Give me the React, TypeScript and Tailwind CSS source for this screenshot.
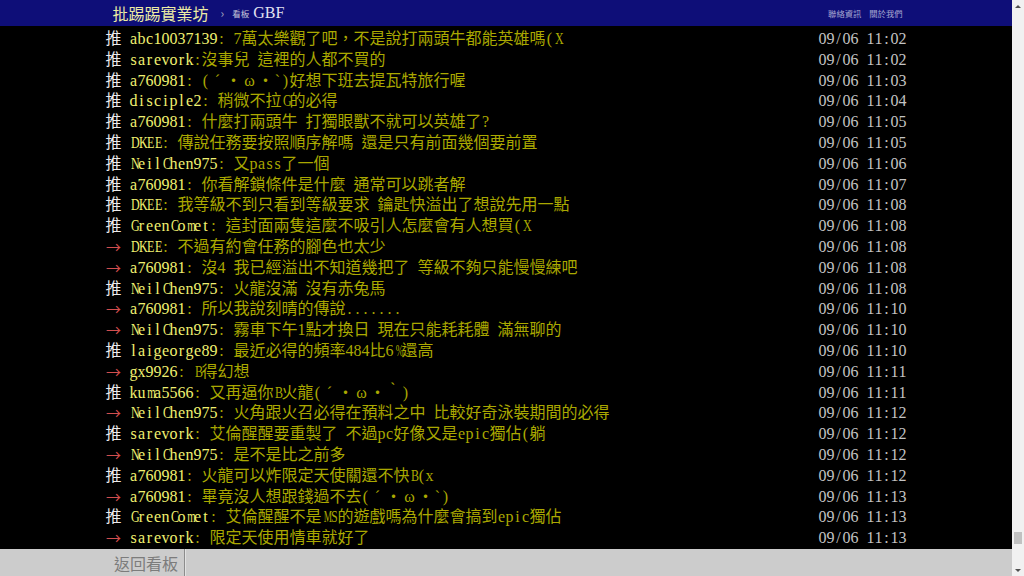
type Push = { tag: "推" | "→"; user: string; text: string; time: string };

const pushes: Push[] = [
  { tag: "推", user: "abc10037139", text: ": 7萬太樂觀了吧，不是說打兩頭牛都能英雄嗎(X", time: "09/06 11:02" },
  { tag: "推", user: "sarevork", text: ":沒事兒 這裡的人都不買的", time: "09/06 11:02" },
  { tag: "推", user: "a760981", text: ": (´・ω・`)好想下班去提瓦特旅行喔", time: "09/06 11:03" },
  { tag: "推", user: "disciple2", text: ": 稍微不拉G的必得", time: "09/06 11:04" },
  { tag: "推", user: "a760981", text: ": 什麼打兩頭牛 打獨眼獸不就可以英雄了?", time: "09/06 11:05" },
  { tag: "推", user: "DKEE", text: ": 傳說任務要按照順序解嗎 還是只有前面幾個要前置", time: "09/06 11:05" },
  { tag: "推", user: "NeilChen975", text: ": 又pass了一個", time: "09/06 11:06" },
  { tag: "推", user: "a760981", text: ": 你看解鎖條件是什麼 通常可以跳者解", time: "09/06 11:07" },
  { tag: "推", user: "DKEE", text: ": 我等級不到只看到等級要求 鑰匙快溢出了想說先用一點", time: "09/06 11:08" },
  { tag: "推", user: "GreenComet", text: ": 這封面兩隻這麼不吸引人怎麼會有人想買(X", time: "09/06 11:08" },
  { tag: "→", user: "DKEE", text: ": 不過有約會任務的腳色也太少", time: "09/06 11:08" },
  { tag: "→", user: "a760981", text: ": 沒4 我已經溢出不知道幾把了 等級不夠只能慢慢練吧", time: "09/06 11:08" },
  { tag: "推", user: "NeilChen975", text: ": 火龍沒滿 沒有赤兔馬", time: "09/06 11:08" },
  { tag: "→", user: "a760981", text: ": 所以我說刻晴的傳說.......", time: "09/06 11:10" },
  { tag: "→", user: "NeilChen975", text: ": 霧車下午1點才換日 現在只能耗耗體 滿無聊的", time: "09/06 11:10" },
  { tag: "推", user: "laigeorge89", text: ": 最近必得的頻率484比6%還高", time: "09/06 11:10" },
  { tag: "→", user: "gx9926", text: ": B得幻想", time: "09/06 11:11" },
  { tag: "推", user: "kuma5566", text: ": 又再逼你B火龍(´・ω・｀)", time: "09/06 11:11" },
  { tag: "→", user: "NeilChen975", text: ": 火角跟火召必得在預料之中 比較好奇泳裝期間的必得", time: "09/06 11:12" },
  { tag: "推", user: "sarevork", text: ": 艾倫醒醒要重製了 不過pc好像又是epic獨佔(躺", time: "09/06 11:12" },
  { tag: "→", user: "NeilChen975", text: ": 是不是比之前多", time: "09/06 11:12" },
  { tag: "推", user: "a760981", text: ": 火龍可以炸限定天使關還不快B(x", time: "09/06 11:12" },
  { tag: "→", user: "a760981", text: ": 畢竟沒人想跟錢過不去(´・ω・`)", time: "09/06 11:13" },
  { tag: "推", user: "GreenComet", text: ": 艾倫醒醒不是MS的遊戲嗎為什麼會搞到epic獨佔", time: "09/06 11:13" },
  { tag: "→", user: "sarevork", text: ": 限定天使用情車就好了", time: "09/06 11:13" },
];

// half-width glyphs squeezed into an 8px cell, like the BBS font does
function cellClass(ch: string) {
  if (ch.charCodeAt(0) >= 0x80) return "inline-block w-[16px] text-center";
  if (ch === "M" || ch === "W" || ch === "%") return "inline-block w-[8px] text-center scale-x-[0.58]";
  if (ch === "m" || ch === "w") return "inline-block w-[8px] text-center scale-x-[0.68]";
  if (/[A-Z]/.test(ch)) return "inline-block w-[8px] text-center scale-x-[0.75]";
  return "inline-block w-[8px] text-center";
}

function Cells({ text }: { text: string }) {
  return (
    <>
      {Array.from(text).map((ch, i) => (
        <span key={i} className={cellClass(ch)}>
          {ch === " " ? "\u00a0" : ch}
        </span>
      ))}
    </>
  );
}

function PushRow({ p }: { p: Push }) {
  return (
    <div className="flex h-[20.8px] whitespace-nowrap leading-[20.8px]">
      {p.tag === "推" ? (
        <span className="mr-[8px] inline-block w-[16px] text-[#ececec]">推</span>
      ) : (
        <span className="mr-[8px] inline-block w-[16px] text-center font-['Noto_Sans_CJK_TC',sans-serif] text-[15px] text-[#d24e4e]">
          →
        </span>
      )}
      <span className="text-[#f0f070]">
        <Cells text={p.user} />
      </span>
      <span className="text-[#aaa800]">
        <Cells text={p.text} />
      </span>
      <span className="ml-auto text-[#c4c4c4]">
        <Cells text={p.time} />
      </span>
    </div>
  );
}

function Scrollbar() {
  return (
    <div className="flex h-full w-[12px] flex-col bg-[#f1f1f1]">
      <div className="flex h-[12px] items-center justify-center">
        <div className="h-0 w-0 border-x-[3px] border-b-[3px] border-x-transparent border-b-[#505050]" />
      </div>
      <div className="flex-1" />
      <div className="mx-[2px] h-[12px] bg-[#c1c1c1]" />
      <div className="h-[20px]" />
      <div className="flex h-[12px] items-center justify-center">
        <div className="h-0 w-0 border-x-[3px] border-t-[3px] border-x-transparent border-t-[#505050]" />
      </div>
    </div>
  );
}

export default function App() {
  return (
    <div className="flex h-[576px] w-[1024px] overflow-hidden bg-black">
      <div className="flex h-full flex-1 flex-col">
        <header className="h-[26px] bg-[#0e0e78] font-['Noto_Sans_CJK_TC',sans-serif]">
          <div className="mx-auto flex h-full w-[801px] items-center justify-between pl-[7px] pr-[4px]">
            <div className="flex items-center">
              <span className="text-[16px] leading-none text-[#ececa4]">批踢踢實業坊</span>
              <span className="ml-[12px] text-[12px] leading-none text-[#a8a8c0]">›</span>
              <span className="ml-[8px] text-[8.5px] leading-none text-[#c8c8d8]">看板</span>
              <span className="ml-[4px] font-['Liberation_Serif',serif] text-[16px] leading-none text-[#e2e2f2]">
                GBF
              </span>
            </div>
            <div className="flex items-center gap-[8px] text-[8.3px] leading-none text-[#a6a6d0]">
              <span>聯絡資訊</span>
              <span>關於我們</span>
            </div>
          </div>
        </header>

        <main className="flex-1 overflow-hidden pt-[3px] font-['Liberation_Serif','Noto_Sans_CJK_TC',serif] text-[16px]">
          <div className="mx-auto w-[801px]">
            {pushes.map((p, i) => (
              <PushRow key={i} p={p} />
            ))}
          </div>
        </main>

        <footer className="flex h-[27px] bg-[#cccccc] font-['Noto_Sans_CJK_TC',sans-serif]">
          <div className="flex w-[184px] items-center justify-end pr-[6px] text-[16px] text-[#7c7c7c]">
            返回看板
          </div>
          <div className="w-[1px] bg-[#8c8c8c]" />
          <div className="w-[1px] bg-[#e2e2e2]" />
        </footer>
      </div>
      <Scrollbar />
    </div>
  );
}
